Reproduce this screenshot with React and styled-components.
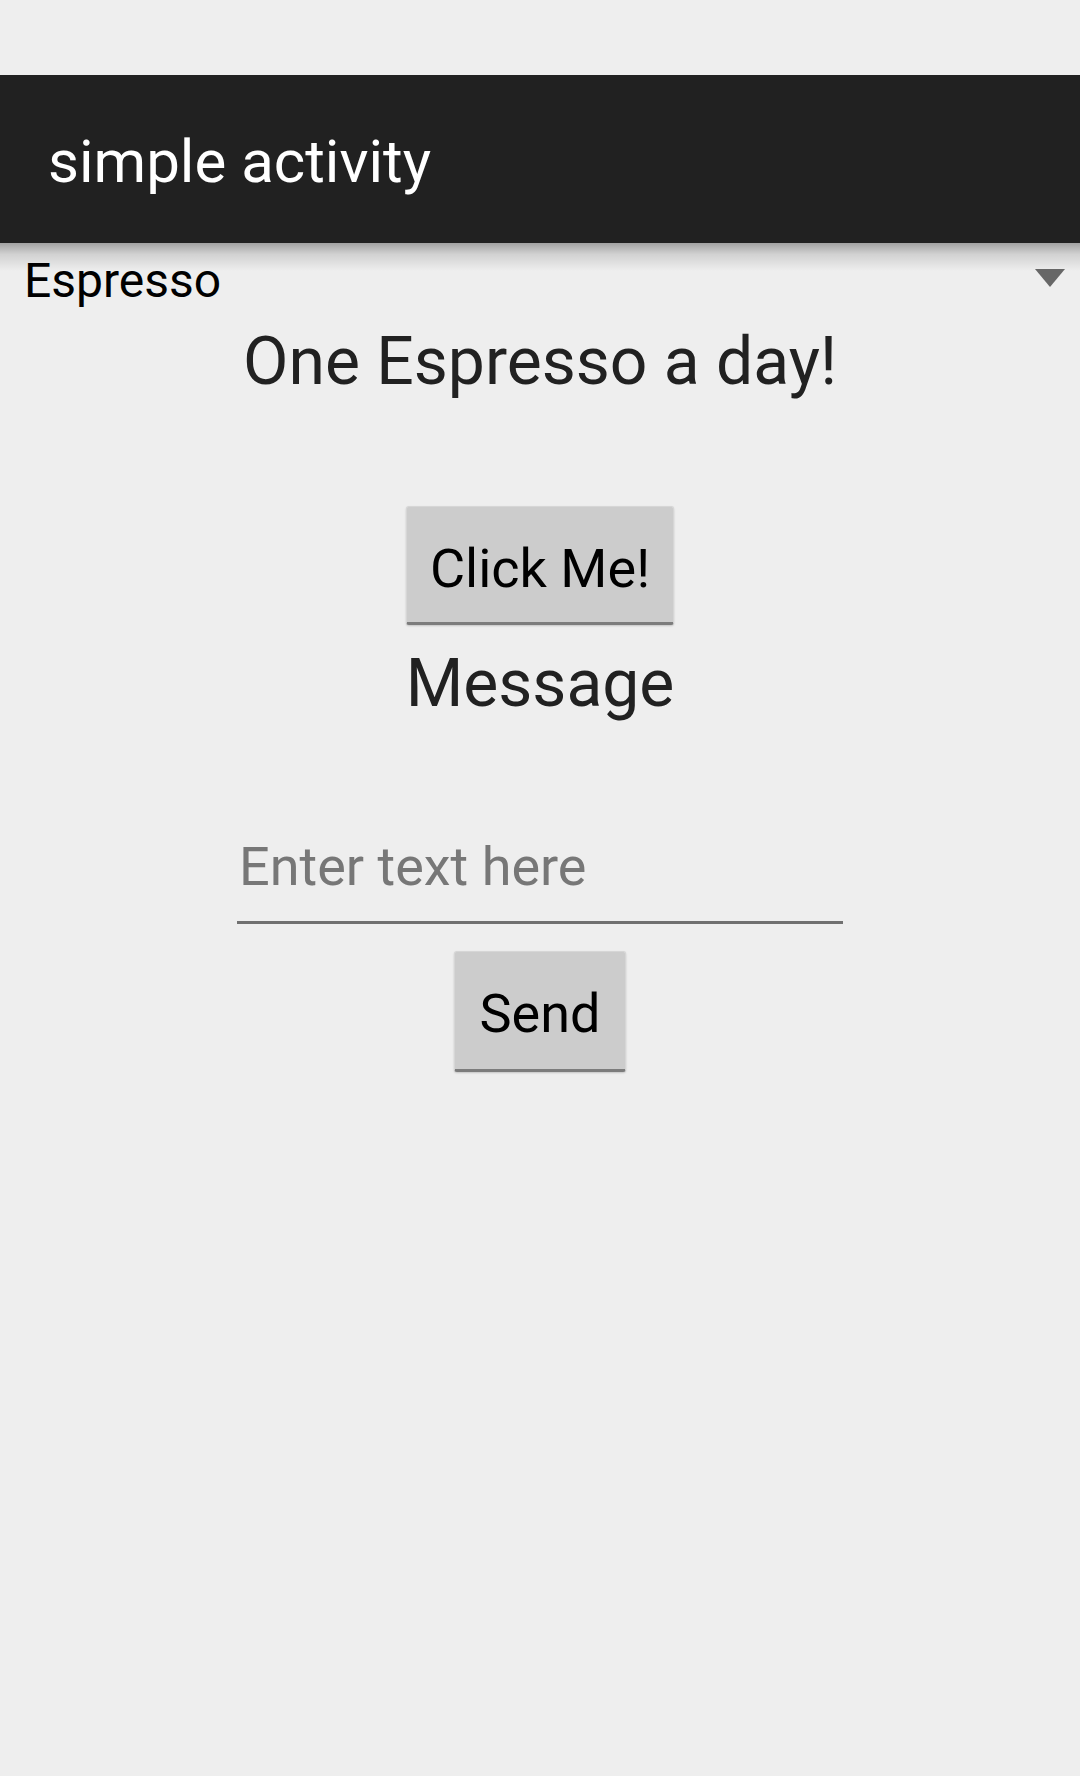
import React from 'react';
import styled, { createGlobalStyle } from 'styled-components';

const GlobalStyle = createGlobalStyle`
    html, body {
        margin: 0;
        padding: 0;
        background: #eeeeee;
    }
    body {
        font-family: Roboto, "Noto Sans", "Liberation Sans", sans-serif;
    }
`;

const Screen = styled.div`
    width: 1080px;
    min-height: 1776px;
    background: #eeeeee;
    display: flex;
    flex-direction: column;
`;

const StatusBar = styled.div`
    height: 75px;
    background: #eeeeee;
`;

const ActionBar = styled.header`
    position: relative;
    z-index: 2;
    height: 168px;
    box-sizing: border-box;
    padding: 57px 0 0 48px;
    background: #212121;

    &::after {
        content: '';
        position: absolute;
        left: 0;
        right: 0;
        top: 100%;
        height: 28px;
        background: linear-gradient(to bottom, rgba(0, 0, 0, 0.32), rgba(0, 0, 0, 0.12) 40%, rgba(0, 0, 0, 0));
        pointer-events: none;
    }
`;

const Title = styled.h1`
    margin: 0;
    font-size: 60px;
    line-height: 60px;
    font-weight: 400;
    color: #ffffff;
`;

const Content = styled.main`
    display: flex;
    flex-direction: column;
    align-items: center;
`;

const SpinnerRow = styled.div`
    align-self: stretch;
    display: flex;
    justify-content: space-between;
    align-items: flex-start;
    padding: 14px 15px 0 24px;
`;

const SpinnerText = styled.span`
    font-size: 48px;
    line-height: 48px;
    color: #000000;
`;

const SpinnerArrow = styled.svg`
    margin-top: 12px;
    display: block;
`;

const Label = styled.p`
    margin: ${p => p.$top}px 0 0;
    font-size: 66px;
    line-height: 66px;
    color: #212121;
`;

const Button = styled.button`
    margin-top: ${p => p.$top}px;
    box-sizing: border-box;
    height: ${p => p.$height}px;
    padding: ${p => p.$padTop}px ${p => p.$padSide}px 0;
    font-family: inherit;
    font-size: 54px;
    line-height: 54px;
    color: #000000;
    background: #cccccc;
    border: 1px solid #d6d6d6;
    border-bottom: 3px solid #7c7c7c;
    border-radius: 3px;
    box-shadow: 0 1px 2px rgba(0, 0, 0, 0.18);
    display: flex;
    align-items: flex-start;
    justify-content: center;
`;

const Field = styled.input`
    margin-top: 122px;
    width: 606px;
    height: 85px;
    box-sizing: border-box;
    padding: 0 0 28px 2px;
    border: none;
    border-bottom: 3px solid #707070;
    background: transparent;
    font-family: inherit;
    font-size: 54px;
    line-height: 54px;
    color: #212121;
    outline: none;

    &::placeholder {
        color: #777777;
    }
`;

function App() {
    return (
        <Screen>
            <GlobalStyle />
            <StatusBar />
            <ActionBar>
                <Title>simple activity</Title>
            </ActionBar>
            <Content>
                <SpinnerRow>
                    <SpinnerText>Espresso</SpinnerText>
                    <SpinnerArrow width="30" height="18" viewBox="0 0 30 18">
                        <polygon points="0,0 30,0 15,18" fill="#676767" />
                    </SpinnerArrow>
                </SpinnerRow>
                <Label $top={24}>One Espresso a day!</Label>
                <Button $top={111} $height={119} $padTop={35} $padSide={23}>Click Me!</Button>
                <Label $top={26}>Message</Label>
                <Field placeholder="Enter text here" />
                <Button $top={27} $height={121} $padTop={35} $padSide={25}>Send</Button>
            </Content>
        </Screen>
    );
}

export default App;
